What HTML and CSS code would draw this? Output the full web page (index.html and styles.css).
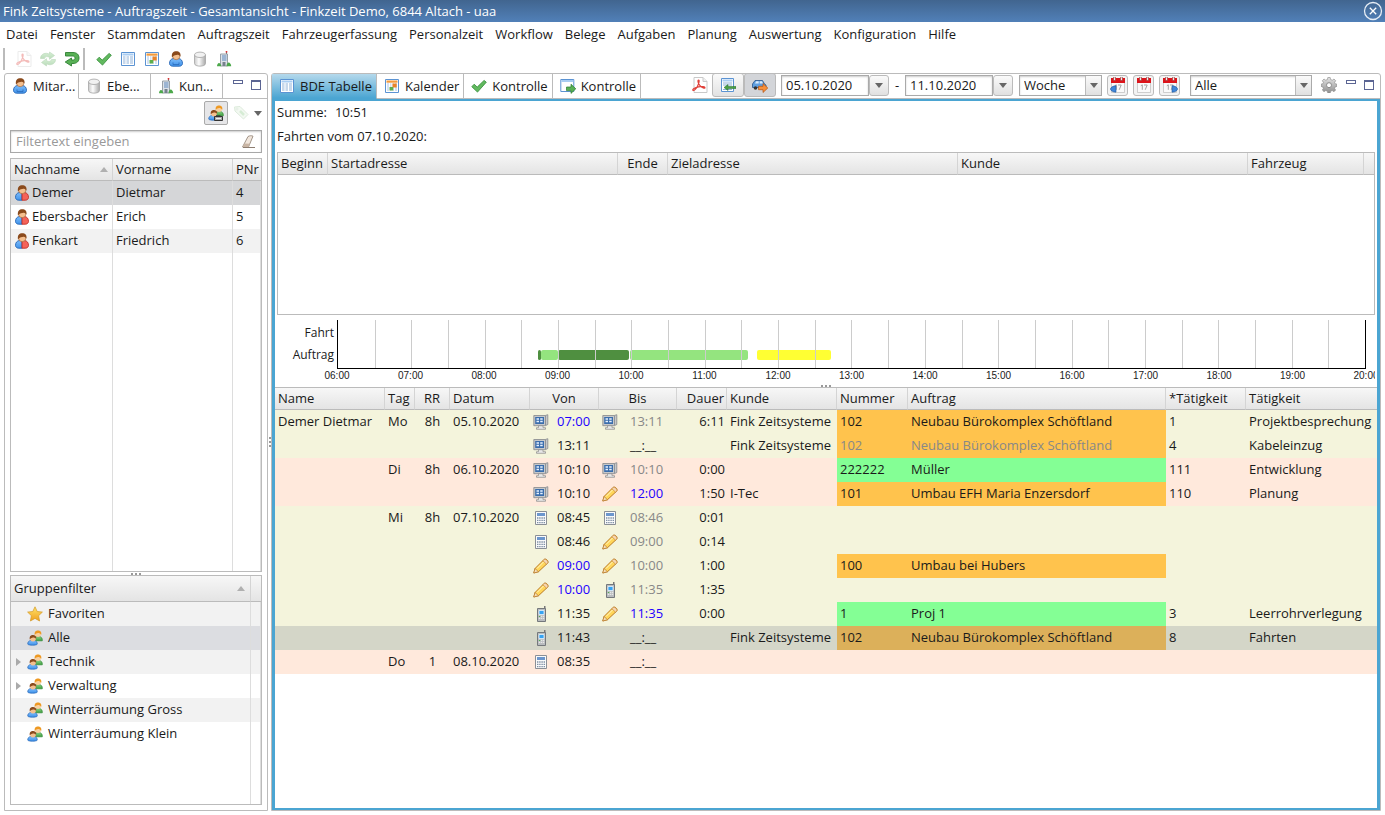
FILE: index.html
```html
<!DOCTYPE html>
<html lang="de">
<head>
<meta charset="utf-8">
<meta name="viewport" content="width=device-width, initial-scale=1">
<title>Fink Zeitsysteme - Auftragszeit</title>
<link rel="stylesheet" href="styles.css">
</head>
<body>
<svg class="defs" aria-hidden="true">
  <defs>
    <linearGradient id="g-blue" x1="0" y1="0" x2="0" y2="1"><stop offset="0" stop-color="#7dbcfa"/><stop offset="1" stop-color="#3f92ea"/></linearGradient>
    <linearGradient id="g-green" x1="0" y1="0" x2="0" y2="1"><stop offset="0" stop-color="#8fd48a"/><stop offset="1" stop-color="#3a9a3a"/></linearGradient>
    <linearGradient id="g-cyl" x1="0" y1="0" x2="1" y2="0"><stop offset="0" stop-color="#c9c9c9"/><stop offset=".4" stop-color="#fdfdfd"/><stop offset="1" stop-color="#a8a8a8"/></linearGradient>
    <linearGradient id="g-gold" x1="0" y1="0" x2="0" y2="1"><stop offset="0" stop-color="#ffe46a"/><stop offset="1" stop-color="#f0a020"/></linearGradient>
    <linearGradient id="g-grey" x1="0" y1="0" x2="0" y2="1"><stop offset="0" stop-color="#e4e4e4"/><stop offset="1" stop-color="#8f8f8f"/></linearGradient>
  </defs>
  <symbol id="i-pdf" viewBox="0 0 16 16"><path d="M2 .5h9l4 4v11H2z" fill="#fff" stroke="#c9c9c9"/><path d="M11 .5v4h4" fill="#eee" stroke="#c9c9c9"/><path d="M6.500 3c1.500 0 0 4-1 6.200S2 14.200 1 13.300s1.800-2.600 5.500-3.400 6.500-.3 6.500.8-3 .2-5-2S5.500 3 6.500 3z" fill="none" stroke="#e0403a" stroke-width="1.200"/></symbol>
  <symbol id="i-refresh" viewBox="0 0 16 16"><path d="M.5 7.500C.5 3 5.500 1 9.500 3.200V1l5 3.500-5 3.800V6.300C7 5 5 5.500 4.500 7.500z" fill="url(#g-green)" stroke="#3a8f3a" stroke-width=".6"/><path d="M15.500 8.500c0 4.500-5 6.500-9 4.300V15l-5-3.500 5-3.800v2c2.500 1.300 4.500.8 5-1.200z" fill="url(#g-green)" stroke="#3a8f3a" stroke-width=".6"/></symbol>
  <symbol id="i-return" viewBox="0 0 16 16"><path d="M1.500 1.500H9c4 0 6 2.300 6 5.500s-2 5.500-6 5.500H7.500V15L1.200 11 7.500 7v2H9c1.300 0 2-.8 2-1.800S10.300 5 9 5H1.500z" fill="#58b055" stroke="#2f7f33" stroke-width=".9"/></symbol>
  <symbol id="i-check" viewBox="0 0 16 16"><path d="M.8 8.700 3.200 6.200l3 2.900 6.900-6.700 2.200 1.800-8.800 9.900z" fill="#62b95f" stroke="#2f8a35" stroke-width=".8"/></symbol>
  <symbol id="i-table" viewBox="0 0 16 16"><path d="M1.500 1.500h13v13h-13z" fill="#fff" stroke="#5b93d3"/><path d="M2.500 2.500h11v2h-11z" fill="#a9cdf2"/><path d="M3 6h10M3 8h10M3 10h10M3 12h10" stroke="#8fb1d8"/><path d="M6 5v9M9.500 5v9" stroke="#fff"/></symbol>
  <symbol id="i-cal" viewBox="0 0 16 16"><path d="M1.500 1.500h13v13h-13z" fill="#fff" stroke="#5b93d3"/><path d="M2.500 2.500h11v2.200h-11z" fill="#f39a3c"/><path d="M3 6h10M3 8h10M3 10h10M3 12h10" stroke="#a9c3e2"/><path d="M5.500 5v9M8 5v9M10.500 5v9" stroke="#fff"/><path d="M8.500 5.500h4.200v4H8.500z" fill="#e98228"/><path d="M5.500 9h3.800v3.500H5.500z" fill="#5cae4b"/></symbol>
  <symbol id="i-person" viewBox="0 0 16 16"><path d="M1.500 12.500c0-3 1.500-4.700 4-5h5c2.500.3 4 2 4 5 0 1.500-1.500 2.700-3 2.700h-7c-1.500 0-3-1.200-3-2.700z" fill="url(#g-blue)" stroke="#2564b4" stroke-width=".9"/><path d="M5 11.500v2h6v-2" fill="none" stroke="#2564b4" stroke-width=".7"/><circle cx="8.200" cy="5" r="3.700" fill="#f4bf8e" stroke="#8a4a1c" stroke-width=".5"/><path d="M4 6.500C3.200 2.200 5.400.3 8.300.3s4.700 1.600 4.200 5.200C11.500 4.500 11 3.500 9.500 3.700S5.800 4 4 6.500z" fill="#8a4a1c"/></symbol>
  <symbol id="i-worker" viewBox="0 0 16 16"><path d="M1.500 12.500c0-3 1.500-4.700 4-5H8v7.700H4.500c-1.500 0-3-1.200-3-2.700z" fill="url(#g-blue)" stroke="#2564b4" stroke-width=".9"/><path d="M8 7.500h2.500c2.500.3 4 2 4 5 0 1.500-1.500 2.700-3 2.700H8z" fill="#f4635a" stroke="#c03028" stroke-width=".9"/><circle cx="8.200" cy="5" r="3.700" fill="#f4bf8e" stroke="#8a4a1c" stroke-width=".5"/><path d="M4 6.500C3.200 2.200 5.400.3 8.300.3s4.700 1.600 4.200 5.200C11.500 4.500 11 3.500 9.500 3.700S5.800 4 4 6.500z" fill="#8a4a1c"/></symbol>
  <symbol id="i-db" viewBox="0 0 16 16"><path d="M2.500 4v8.500c0 3.500 11 3.500 11 0V4z" fill="url(#g-cyl)" stroke="#a5a5a5" stroke-width=".8"/><ellipse cx="8" cy="3.800" rx="5.500" ry="2.700" fill="#f1f1f1" stroke="#a5a5a5" stroke-width=".8"/></symbol>
  <symbol id="i-building" viewBox="0 0 16 16"><path d="M10.500 1v3" stroke="#555" stroke-width=".8"/><path d="M9.700 0h1.600v1.600H9.700z" fill="#d33"/><path d="M4.500 3h7v12h-7z" fill="#dde2e8" stroke="#8e979f" stroke-width=".9"/><path d="M6 5h4.500M6 7h4.500M6 9h4.500" stroke="#5d88bd"/><path d="M6.500 11h3v4h-3z" fill="#76828d"/><path d="M1 15.300c0-1.800 1-3.300 2-3.300s2.200 1.500 2.200 3.300zM10.500 15.300c0-2 1-3.800 2.200-3.800s2.500 1.800 2.500 3.800z" fill="#4ba84a"/></symbol>
  <symbol id="i-users" viewBox="0 0 16 16"><path d="M7 10.800c-.3-2.500 1-4 2.500-4.200h3c2 .2 3 1.900 2.800 4.200z" fill="url(#g-green)" stroke="#2f8a35" stroke-width=".7"/><circle cx="11" cy="4" r="3" fill="#f9cf9d"/><path d="M7.700 5C7.200 1.500 9 .4 11 .4s3.900 1.200 3.300 4.400C13 3.500 12 2.800 11 3S8.800 3.500 7.700 5z" fill="#ee9922"/><path d="M.8 14.200c-.3-2 1-3.500 3-3.700h3.400c2 .2 3.300 1.700 3 3.700-.9 1.300-8.500 1.300-9.400 0z" fill="url(#g-blue)" stroke="#2564b4" stroke-width=".7"/><circle cx="6" cy="8.500" r="2.900" fill="#f4bf8e"/><path d="M2.800 9.400C2.200 6 4 5 6 5s3.700 1.200 3.200 3.800C8 7.800 7 7.200 6 7.500S3.900 7.800 2.800 9.400z" fill="#8a4a1c"/></symbol>
  <symbol id="i-key" viewBox="0 0 9 6"><path d="M.5 1.500h8v4h-8z" fill="#aaa" stroke="#333"/><path d="M2.500 1.500V.3h4" fill="none" stroke="#333" stroke-width=".8"/><path d="M2 3.500h5" stroke="#eee"/></symbol>
  <symbol id="i-tag" viewBox="0 0 16 16"><path d="M1.500 2 7 1.500l8 8L10.500 14l-8.500-8z" fill="#dff0dc" stroke="#9fc79c"/><circle cx="4" cy="4" r="1" fill="#fff" stroke="#8bb188" stroke-width=".6"/><path d="m7 6 4 4" stroke="#8cc98a" stroke-width="2.500"/></symbol>
  <symbol id="i-eraser" viewBox="0 0 16 16"><path d="M1.500 13 7 2.500c2-1 3.500-1 5-.3L7.500 13z" fill="#f1e6dc" stroke="#8d7d70" stroke-width=".8"/><path d="m3.500 9.500 5.500.2L7.500 13h-6z" fill="#c9b5a4"/><path d="M2 13.500h12" stroke="#8d7d70"/></symbol>
  <symbol id="i-star" viewBox="0 0 16 16"><path d="m8 .8 2.200 4.700 5.200.6-3.800 3.600 1 5.300L8 12.400 3.400 15l1-5.300L.6 6.100l5.200-.6z" fill="url(#g-gold)" stroke="#d39a26" stroke-width=".7"/></symbol>
  <symbol id="i-export" viewBox="0 0 16 16"><path d="M.8 1.500h13v12H.8z" fill="#fff" stroke="#5b93d3"/><path d="M1.300 2h12v2h-12z" fill="#a9cdf2"/><path d="M6.500 9H11V6.200l4.800 4.600L11 15.400v-2.800H6.500z" fill="#58b055" stroke="#2a7a30" stroke-width=".7"/></symbol>
  <symbol id="i-tablearrow" viewBox="0 0 16 16"><path d="M1.500 1.500h12v13h-12z" fill="#fff" stroke="#5b93d3"/><path d="M2.500 2.500h10v2h-10z" fill="#a9cdf2"/><path d="M3 6h9M3 8h9M3 12.500h9" stroke="#8fb1d8"/><path d="m4 10.500 4-3v2h8v2H8v2z" fill="#4aa048" stroke="#226a26" stroke-width=".5"/></symbol>
  <symbol id="i-car" viewBox="0 0 16 16"><path d="M.5 10.500V7L3 3.500h7.500l2 3.500 1.500 1v2.500z" fill="#5f9fe0" stroke="#28558c" stroke-width=".8"/><path d="M3 6.500 4.200 4.200h2.500v2.300zM7.700 4.200h2.300l1 2.300H7.700z" fill="#dcecfb"/><circle cx="3.500" cy="11" r="1.800" fill="#333"/><path d="M6.500 9.300H11V6.500l4.800 4.500L11 15.500v-2.800H6.500z" fill="#f7903a" stroke="#b5520f" stroke-width=".7"/></symbol>
  <symbol id="i-day" viewBox="0 0 16 16"><path d="M1.500 5h13v10.500h-13z" fill="#fafafa" stroke="#bbb" stroke-width=".7"/><path d="M1 1h14v5H1z" fill="#dc141b"/><path d="M3.500 0h2v3.500h-2zM10.500 0h2v3.500h-2z" fill="#eee" stroke="#8d2020" stroke-width=".5"/><path d="m4.800 8.800 1.500-1v5M8 8h3.200l-2 4.800" fill="none" stroke="#a5a5a5"/></symbol>
  <symbol id="i-left" viewBox="0 0 8 8"><path d="M6 .8v6.400C3 7.200.5 5.500.5 4S3 .8 6 .8z" fill="#3f86d8" stroke="#1d559c" stroke-width=".6"/></symbol>
  <symbol id="i-gear" viewBox="0 0 16 16"><path d="M6.800.5h2.400l.4 2 1.700.7L13 2l1.700 1.700-1.100 1.700.6 1.400 1.800.4v2.100l-1.800.6-.6 1.500 1 1.600-1.600 1.700-1.700-1.100-1.700.6-.4 1.800H6.800l-.4-1.800-1.700-.6L3 14.700 1.300 13l1.100-1.600-.7-1.500L0 9.300V7.200l1.700-.4.7-1.400-1.100-1.700L3 2l1.700 1.200 1.700-.7z" fill="url(#g-grey)" stroke="#868686" stroke-width=".6"/><circle cx="8" cy="8.200" r="2.500" fill="#fff" stroke="#8b8b8b"/></symbol>
  <symbol id="i-pc" viewBox="0 0 16 16"><path d="M.8 1.500h11.500L14.800.7v9.800l-2.500 1.200H.8z" fill="#c6c8ca" stroke="#85888c" stroke-width=".8"/><path d="M12.500 1.500v10" stroke="#909498"/><path d="M2.200 3h8.800v7H2.200z" fill="#3a6dac"/><path d="M3.500 5h2.500M7.200 5h2.500M3.500 7.500h2.500M7.200 7.500h2.500" stroke="#e8f2ff" stroke-width="1.400"/><path d="M5.500 11.700h4.500v2h2.500v1.600H3.500v-1.600h2z" fill="#e8e8e8" stroke="#8a8a8a" stroke-width=".7"/></symbol>
  <symbol id="i-pencil" viewBox="0 0 16 16"><path d="M.8 15 2 10.500 11 1.500c1.700-1.500 5 1.300 3.800 3.500L5.500 13.700z" fill="#ffd65a" stroke="#b3701c" stroke-width=".9"/><path d="M.8 15 2 10.500l3.500 3.200z" fill="#f5deb8" stroke="#b3701c" stroke-width=".6"/><path d="m9.800 2.700 3.800 3.500 1.200-1.300c.7-2.100-2.300-4.500-3.800-3.300z" fill="#f7d5b0" stroke="#b3701c" stroke-width=".5"/><path d="m4 10.500 6.500-6.500" stroke="#fff7c4"/></symbol>
  <symbol id="i-calc" viewBox="0 0 16 16"><path d="M2.500 1.500h11v13h-11z" fill="#fafafa" stroke="#8a8f96"/><path d="M4 3h8v3H4z" fill="#6c96cd"/><path d="M4 8h8M4 10.300h8M4 12.600h8" stroke="#7d8ea4" stroke-width="1.300" stroke-dasharray="1.400 .8"/></symbol>
  <symbol id="i-phone" viewBox="0 0 16 16"><path d="M11 0h1.500v4H11z" fill="#777"/><path d="M4.500 2.500h8v13h-8z" fill="#b9bcbf" stroke="#74787c"/><path d="M6 4.500h5v4H6z" fill="#36a3f2" stroke="#e4f3ff" stroke-width=".8"/><path d="M5.800 10.300h5.400M5.800 12.300h5.400" stroke="#f2f2f2" stroke-dasharray="1.400 .6"/><path d="M5.800 10h1.500v1H5.800z" fill="#5a5"/></symbol>
  <symbol id="i-close" viewBox="0 0 20 20"><circle cx="10" cy="10" r="8.500" fill="none" stroke="#e6edf5" stroke-width="1.300"/><path d="m6.800 6.800 6.400 6.400m0-6.400-6.400 6.400" stroke="#fff" stroke-width="1.300"/></symbol>
</svg>

<header class="titlebar">
  <h1>Fink Zeitsysteme - Auftragszeit - Gesamtansicht - Finkzeit Demo, 6844 Altach - uaa</h1>
  <button class="close" aria-label="Schließen"><svg><use href="#i-close"/></svg></button>
</header>

<nav class="menu">
  <button>Datei</button><button>Fenster</button><button>Stammdaten</button><button>Auftragszeit</button><button>Fahrzeugerfassung</button><button>Personalzeit</button><button>Workflow</button><button>Belege</button><button>Aufgaben</button><button>Planung</button><button>Auswertung</button><button>Konfiguration</button><button>Hilfe</button>
</nav>

<div class="toolbar">
  <span class="sep"></span>
  <div class="tools">
    <button disabled aria-label="PDF"><svg class="ic"><use href="#i-pdf"/></svg></button>
    <button disabled aria-label="Aktualisieren"><svg class="ic"><use href="#i-refresh"/></svg></button>
    <button aria-label="Zurück"><svg class="ic"><use href="#i-return"/></svg></button>
  </div>
  <span class="sep"></span>
  <div class="tools">
    <button aria-label="Kontrolle"><svg class="ic"><use href="#i-check"/></svg></button>
    <button aria-label="Tabelle"><svg class="ic"><use href="#i-table"/></svg></button>
    <button aria-label="Kalender"><svg class="ic"><use href="#i-cal"/></svg></button>
    <button aria-label="Mitarbeiter"><svg class="ic"><use href="#i-person"/></svg></button>
    <button aria-label="Ebenen"><svg class="ic"><use href="#i-db"/></svg></button>
    <button aria-label="Kunden"><svg class="ic"><use href="#i-building"/></svg></button>
  </div>
</div>

<main class="work">
  <aside class="folder side">
    <div class="tabbar">
      <button class="tab current"><svg class="ic"><use href="#i-person"/></svg>Mitar...</button>
      <button class="tab"><svg class="ic"><use href="#i-db"/></svg>Ebe...</button>
      <button class="tab"><svg class="ic"><use href="#i-building"/></svg>Kun...</button>
      <div class="winctl"><button class="min" aria-label="Minimieren"></button><button class="max" aria-label="Maximieren"></button></div>
    </div>
    <div class="side-body">
      <div class="side-tools">
        <button class="toggle" aria-label="Gruppen"><svg class="ic"><use href="#i-users"/><use href="#i-key" x="6" y="10" width="9" height="6"/></svg></button>
        <button class="plain" disabled aria-label="Markierung"><svg class="ic"><use href="#i-tag"/></svg></button>
        <button class="plain" aria-label="Menü"><span class="down"></span></button>
      </div>
      <div class="filter">
        <input type="text" placeholder="Filtertext eingeben" aria-label="Filtertext">
        <button aria-label="Leeren"><svg class="ic"><use href="#i-eraser"/></svg></button>
      </div>
      <div class="box staff">
        <table class="list">
          <colgroup><col class="c-last"><col><col class="c-pnr"></colgroup>
          <thead><tr><th>Nachname<span class="up"></span></th><th>Vorname</th><th>PNr</th></tr></thead>
          <tbody>
            <tr class="sel"><td><svg class="ic"><use href="#i-worker"/></svg>Demer</td><td>Dietmar</td><td>4</td></tr>
            <tr><td><svg class="ic"><use href="#i-worker"/></svg>Ebersbacher</td><td>Erich</td><td>5</td></tr>
            <tr class="odd"><td><svg class="ic"><use href="#i-worker"/></svg>Fenkart</td><td>Friedrich</td><td>6</td></tr>
            <tr class="fill"><td></td><td></td><td></td></tr>
          </tbody>
        </table>
      </div>
      <div class="sash"></div>
      <div class="box groups">
        <table class="list">
          <colgroup><col><col class="c-end"></colgroup>
          <thead><tr><th>Gruppenfilter<span class="up"></span></th><th></th></tr></thead>
          <tbody>
            <tr class="odd"><td><span class="twist"></span><svg class="ic"><use href="#i-star"/></svg>Favoriten</td><td></td></tr>
            <tr class="sel2"><td><span class="twist"></span><svg class="ic"><use href="#i-users"/></svg>Alle</td><td></td></tr>
            <tr class="odd"><td><span class="twist open"></span><svg class="ic"><use href="#i-users"/></svg>Technik</td><td></td></tr>
            <tr><td><span class="twist open"></span><svg class="ic"><use href="#i-users"/></svg>Verwaltung</td><td></td></tr>
            <tr class="odd"><td><span class="twist"></span><svg class="ic"><use href="#i-users"/></svg>Winterräumung Gross</td><td></td></tr>
            <tr><td><span class="twist"></span><svg class="ic"><use href="#i-users"/></svg>Winterräumung Klein</td><td></td></tr>
            <tr class="fill"><td></td><td></td></tr>
          </tbody>
        </table>
      </div>
    </div>
  </aside>

  <div class="vsash"></div>

  <section class="folder view">
    <div class="tabbar">
      <button class="tab active"><svg class="ic"><use href="#i-table"/></svg>BDE Tabelle</button>
      <button class="tab"><svg class="ic"><use href="#i-cal"/></svg>Kalender</button>
      <button class="tab"><svg class="ic"><use href="#i-check"/></svg>Kontrolle</button>
      <button class="tab"><svg class="ic"><use href="#i-export"/></svg>Kontrolle</button>
      <div class="view-tools">
        <button class="plain" aria-label="PDF"><svg class="ic"><use href="#i-pdf"/></svg></button>
        <div class="pair">
          <button class="wide" aria-label="Tabelle"><svg class="ic"><use href="#i-tablearrow"/></svg></button>
          <button class="wide pressed" aria-label="Fahrten"><svg class="ic"><use href="#i-car"/></svg></button>
        </div>
        <div class="date"><input type="text" value="05.10.2020" aria-label="Von"><button aria-label="Datum wählen"><span class="down"></span></button></div>
        <span class="dash">-</span>
        <div class="date"><input type="text" value="11.10.2020" aria-label="Bis"><button aria-label="Datum wählen"><span class="down"></span></button></div>
        <div class="combo span"><select aria-label="Zeitraum"><option>Woche</option></select><span class="arrow"><span class="down"></span></span></div>
        <div class="days">
          <button aria-label="Zurück"><svg class="ic"><use href="#i-day"/><use href="#i-left" x="0" y="8" width="8" height="8"/></svg></button>
          <button aria-label="Heute"><svg class="ic"><use href="#i-day"/></svg></button>
          <button aria-label="Weiter"><svg class="ic"><use href="#i-day"/><use href="#i-left" width="8" height="8" transform="translate(16 8) scale(-1 1)"/></svg></button>
        </div>
        <div class="combo all"><select aria-label="Auswahl"><option>Alle</option></select><span class="arrow"><span class="down"></span></span></div>
        <button class="plain" aria-label="Einstellungen"><svg class="ic"><use href="#i-gear"/></svg></button>
      </div>
      <div class="winctl"><button class="min" aria-label="Minimieren"></button><button class="max" aria-label="Maximieren"></button></div>
    </div>

    <div class="view-body">
      <div class="trips">
        <p>Summe:<span class="sum">10:51</span></p>
        <p>Fahrten vom 07.10.2020:</p>
        <div class="box trip-box">
          <table class="list">
            <colgroup><col class="t-50"><col class="t-290"><col class="t-50"><col class="t-290"><col class="t-290"><col><col class="c-end"></colgroup>
            <thead><tr><th>Beginn</th><th>Startadresse</th><th class="c">Ende</th><th>Zieladresse</th><th>Kunde</th><th>Fahrzeug</th><th></th></tr></thead>
          </table>
        </div>
      </div>

      <div class="timeline">
        <div class="names"><span>Fahrt</span><span>Auftrag</span></div>
        <div class="chart">
          <div class="plot">
            <span class="bar dark" style="left:19.500%;width:.25%"></span>
            <span class="bar light" style="left:19.750%;width:1.680%"></span>
            <span class="bar dark" style="left:21.430%;width:6.950%"></span>
            <span class="bar light" style="left:28.420%;width:11.460%"></span>
            <span class="bar yellow" style="left:40.830%;width:7.150%"></span>
            <div class="ticks"><i></i><i></i><i></i><i></i><i></i><i></i><i></i><i></i><i></i><i></i><i></i><i></i><i></i><i></i><i></i><i></i><i></i><i></i><i></i><i></i><i></i><i></i><i></i><i></i><i></i><i></i><i></i><i></i></div>
          </div>
          <div class="hours"><span>06:00</span><span>07:00</span><span>08:00</span><span>09:00</span><span>10:00</span><span>11:00</span><span>12:00</span><span>13:00</span><span>14:00</span><span>15:00</span><span>16:00</span><span>17:00</span><span>18:00</span><span>19:00</span><span>20:00</span></div>
        </div>
      </div>
      <div class="sash"></div>

      <table class="list bde">
        <colgroup><col class="b-name"><col class="b-tag"><col class="b-rr"><col class="b-date"><col class="b-von"><col class="b-bis"><col class="b-dauer"><col class="b-kunde"><col class="b-nr"><col><col class="b-tnr"><col class="b-tat"></colgroup>
        <thead><tr><th>Name</th><th>Tag</th><th class="c">RR</th><th>Datum</th><th class="c">Von</th><th class="c">Bis</th><th class="r">Dauer</th><th>Kunde</th><th>Nummer</th><th>Auftrag</th><th>*Tätigkeit</th><th>Tätigkeit</th></tr></thead>
        <tbody>
          <tr class="y"><td>Demer Dietmar</td><td>Mo</td><td class="c">8h</td><td>05.10.2020</td><td><svg class="ic"><use href="#i-pc"/></svg><b class="blue">07:00</b></td><td><svg class="ic"><use href="#i-pc"/></svg><b class="grey">13:11</b></td><td class="r">6:11</td><td>Fink Zeitsysteme</td><td class="o">102</td><td class="o">Neubau Bürokomplex Schöftland</td><td>1</td><td>Projektbesprechung</td></tr>
          <tr class="y"><td></td><td></td><td></td><td></td><td><svg class="ic"><use href="#i-pc"/></svg><b>13:11</b></td><td><svg class="ic"></svg><b>__:__</b></td><td></td><td>Fink Zeitsysteme</td><td class="o grey">102</td><td class="o grey">Neubau Bürokomplex Schöftland</td><td>4</td><td>Kabeleinzug</td></tr>
          <tr class="p"><td></td><td>Di</td><td class="c">8h</td><td>06.10.2020</td><td><svg class="ic"><use href="#i-pc"/></svg><b>10:10</b></td><td><svg class="ic"><use href="#i-pc"/></svg><b class="grey">10:10</b></td><td class="r">0:00</td><td></td><td class="g">222222</td><td class="g">Müller</td><td>111</td><td>Entwicklung</td></tr>
          <tr class="p"><td></td><td></td><td></td><td></td><td><svg class="ic"><use href="#i-pc"/></svg><b>10:10</b></td><td><svg class="ic"><use href="#i-pencil"/></svg><b class="blue">12:00</b></td><td class="r">1:50</td><td>I-Tec</td><td class="o">101</td><td class="o">Umbau EFH Maria Enzersdorf</td><td>110</td><td>Planung</td></tr>
          <tr class="y"><td></td><td>Mi</td><td class="c">8h</td><td>07.10.2020</td><td><svg class="ic"><use href="#i-calc"/></svg><b>08:45</b></td><td><svg class="ic"><use href="#i-calc"/></svg><b class="grey">08:46</b></td><td class="r">0:01</td><td></td><td></td><td></td><td></td><td></td></tr>
          <tr class="y"><td></td><td></td><td></td><td></td><td><svg class="ic"><use href="#i-calc"/></svg><b>08:46</b></td><td><svg class="ic"><use href="#i-pencil"/></svg><b class="grey">09:00</b></td><td class="r">0:14</td><td></td><td></td><td></td><td></td><td></td></tr>
          <tr class="y"><td></td><td></td><td></td><td></td><td><svg class="ic"><use href="#i-pencil"/></svg><b class="blue">09:00</b></td><td><svg class="ic"><use href="#i-pencil"/></svg><b class="grey">10:00</b></td><td class="r">1:00</td><td></td><td class="o">100</td><td class="o">Umbau bei Hubers</td><td></td><td></td></tr>
          <tr class="y"><td></td><td></td><td></td><td></td><td><svg class="ic"><use href="#i-pencil"/></svg><b class="blue">10:00</b></td><td><svg class="ic"><use href="#i-phone"/></svg><b class="grey">11:35</b></td><td class="r">1:35</td><td></td><td></td><td></td><td></td><td></td></tr>
          <tr class="y"><td></td><td></td><td></td><td></td><td><svg class="ic"><use href="#i-phone"/></svg><b>11:35</b></td><td><svg class="ic"><use href="#i-pencil"/></svg><b class="blue">11:35</b></td><td class="r">0:00</td><td></td><td class="g">1</td><td class="g">Proj 1</td><td>3</td><td>Leerrohrverlegung</td></tr>
          <tr class="s"><td></td><td></td><td></td><td></td><td><svg class="ic"><use href="#i-phone"/></svg><b>11:43</b></td><td><svg class="ic"></svg><b>__:__</b></td><td></td><td>Fink Zeitsysteme</td><td class="o">102</td><td class="o">Neubau Bürokomplex Schöftland</td><td>8</td><td>Fahrten</td></tr>
          <tr class="p"><td></td><td>Do</td><td class="c">1</td><td>08.10.2020</td><td><svg class="ic"><use href="#i-calc"/></svg><b>08:35</b></td><td><svg class="ic"></svg><b>__:__</b></td><td></td><td></td><td></td><td></td><td></td><td></td></tr>
        </tbody>
      </table>
    </div>
  </section>
</main>
</body>
</html>
```
FILE: styles.css
```css
* { box-sizing: border-box; }
html, body { height: 100%; }
body {
  margin: 0;
  display: flex;
  flex-direction: column;
  font: 13px/18px "Open Sans", "Noto Sans", sans-serif;
  color: #1a1a1a;
  background: #fff;
  overflow: hidden;
}
button, input, select { font: inherit; color: inherit; margin: 0; }
button { border: 0; padding: 0; background: none; display: flex; align-items: center; }
p { margin: 0; }
.defs { position: absolute; width: 0; height: 0; }
.ic { width: 16px; height: 16px; flex: none; display: block; }

.titlebar {
  height: 22px;
  flex: none;
  display: flex;
  align-items: center;
  justify-content: space-between;
  padding: 0 2px 0 3px;
  color: #fff;
  background: linear-gradient(#41658f, #5180b8);
}
.titlebar h1 { margin: 0; font-size: 13px; font-weight: 400; }
.close svg { width: 20px; height: 20px; }

.menu { flex: none; height: 26px; display: flex; align-items: center; gap: 12px; padding: 0 0 2px 6px; }

.toolbar { flex: none; height: 25px; display: flex; align-items: center; padding: 0 0 3px 3px; }
.sep { width: 2px; height: 22px; background: #bbb; }
.tools { display: flex; gap: 8px; padding: 0 3px 0 11px; }
button:disabled .ic { opacity: .35; }

.work { flex: 1; min-height: 0; display: flex; padding: 0 4px 4px; }
.folder { display: flex; flex-direction: column; border: 1px solid #bbb; border-radius: 3px 3px 0 0; }
.side { width: 264px; flex: none; }
.view { flex: 1; min-width: 0; }
.vsash { width: 3px; flex: none; display: flex; }
.vsash::after { content: ""; margin: auto; width: 2px; height: 10px; background: repeating-linear-gradient(#999 0 2px, transparent 2px 4px); }

.tabbar { flex: none; height: 25px; display: flex; }
.tab { height: 25px; gap: 5px; padding: 0 4px 0 7px; border-right: 1px solid #bbb; border-bottom: 1px solid #bbb; white-space: nowrap; }
.side .tab { width: 74px; padding: 0 0 0 7px; }
.side .tab + .tab { width: 72px; }
.side .tab.current { border-bottom-color: transparent; }
.tab.active { background: linear-gradient(#b5d9ec, #4ba5d2); border-bottom-color: #4ba5d2; }
.winctl { flex: 1; display: flex; justify-content: flex-end; gap: 8px; padding: 6px 6px 0 0; border-bottom: 1px solid #bbb; }
.view .winctl { flex: none; padding-left: 9px; }
.min { width: 10px; height: 4px; border: 1px solid #5b6593; }
.max { width: 10px; height: 10px; border: 1px solid #5b6593; border-top-width: 2px; }

.side-body { flex: 1; min-height: 0; display: flex; flex-direction: column; padding: 2px 5px 5px; }
.side-tools { display: flex; justify-content: flex-end; gap: 5px; height: 24px; flex: none; }
.toggle { width: 24px; height: 24px; justify-content: center; border: 1px solid #aaa; border-radius: 2px; background: #e6e6e8; }
.down { border: 4px solid transparent; border-top: 5px solid #666; border-bottom: 0; }
.filter { flex: none; display: flex; align-items: center; height: 23px; margin: 5px 0; padding-right: 4px; border: 1px solid #a8a8a8; box-shadow: inset 0 1px 2px #ccc; }
.filter input { flex: 1; min-width: 0; border: 0; padding: 0 5px 2px; background: none; }
.filter input::placeholder { color: #999; opacity: 1; }
.box { border: 1px solid #bbb; background: #fff; overflow: hidden; }
.staff { flex: 1; min-height: 0; }
.groups { flex: none; height: 230px; }
.sash { flex: none; height: 3px; display: flex; align-items: center; justify-content: center; }
.sash::after { content: ""; width: 10px; height: 2px; background: repeating-linear-gradient(90deg, #999 0 2px, transparent 2px 4px); }

.list { width: 100%; height: 100%; table-layout: fixed; border-collapse: separate; border-spacing: 0; }
.list th {
  height: 22px;
  padding: 0 3px 2px;
  font-weight: 400;
  text-align: left;
  white-space: nowrap;
  border-right: 1px solid #d4d4d4;
  border-bottom: 1px solid #bbb;
  background: linear-gradient(#f7f7f7, #e4e4e4);
}
.list td { height: 24px; padding: 0 3px 2px; white-space: nowrap; overflow: hidden; }
.list th:last-child, .list td:last-child { border-right: 0; }
.list td .ic { display: inline-block; vertical-align: -4px; }
.side .list td { border-right: 1px solid #ddd; }
.side .list td .ic { margin-right: 2px; }
.list .fill td { height: auto; }
.list .c { text-align: center; }
.list .r { text-align: right; padding-right: 2px; }
.up { float: right; margin: 7px 1px 0 0; border: 4px solid transparent; border-bottom: 5px solid #b0b0b0; border-top: 0; }
.c-last { width: 102px; }
.c-pnr { width: 28px; }
.c-end { width: 10px; }
.sel { background: #d5d6d8; }
.sel2 { background: #dcdde1; }
.odd { background: #f2f2f2; }
.side .groups th { height: 26px; }
.groups .list td { padding-left: 5px; }
.groups .list td .ic { margin-right: 5px; }
.groups .up { margin-right: 2px; }
.twist { display: inline-block; width: 11px; height: 8px; vertical-align: 0; }
.twist.open::before { content: ""; display: block; width: 0; border: 4px solid transparent; border-left: 5px solid #aaa; border-right: 0; }

.view-tools { flex: 1; min-width: 0; display: flex; align-items: center; justify-content: flex-end; padding-bottom: 2px; border-bottom: 1px solid #bbb; }
.pair { display: flex; margin: 0 5px 0 4px; }
.wide { width: 32px; height: 24px; justify-content: center; border: 1px solid #bbb; border-radius: 3px; background: linear-gradient(#fafafa, #e2e2e2); }
.wide.pressed { background: #d3d5d9; }
.date { display: flex; }
.date input { width: 88px; height: 21px; padding: 0 4px 1px; border: 1px solid #aaa; box-shadow: inset 0 1px 2px #ccc; }
.date button { width: 20px; height: 21px; justify-content: center; border: 1px solid #bbb; border-radius: 3px; background: linear-gradient(#fafafa, #e0e0e0); }
.dash { width: 16px; text-align: center; }
.combo { position: relative; height: 21px; margin-left: 6px; border: 1px solid #aaa; box-shadow: inset 0 1px 2px #ccc; }
.combo select { display: block; appearance: none; width: 100%; height: 19px; padding: 0 4px 1px; border: 0; background: none; }
.arrow { position: absolute; top: 0; right: 0; bottom: 0; width: 16px; display: flex; align-items: center; justify-content: center; border-left: 1px solid #bbb; background: linear-gradient(#fafafa, #e0e0e0); pointer-events: none; }
.span { width: 83px; }
.all { width: 122px; margin: 0 9px 0 10px; }
.days { display: flex; gap: 5px; margin-left: 5px; }
.days button { width: 21px; height: 21px; justify-content: center; border: 1px solid #bbb; border-radius: 3px; background: #f3f3f3; }

.view-body { flex: 1; min-height: 0; display: flex; flex-direction: column; border: 3px solid #4ba5d2; border-width: 2px 3px; }
.trips { flex: none; padding: 1px 2px 0; }
.trips p { height: 24px; padding: 1px 0; }
.sum { margin-left: 8px; }
.trip-box { height: 163px; margin-top: 2px; }
.trip-box .list { height: auto; }
.t-50 { width: 50px; }
.t-290 { width: 290px; }

.timeline { flex: none; display: flex; height: 69px; margin-right: 2px; padding-top: 5px; overflow: hidden; }
.names { width: 62px; flex: none; padding-right: 3px; text-align: right; font-size: 12px; line-height: 22px; padding-top: 2px; }
.names span { display: block; }
.chart { flex: 1; min-width: 0; padding-right: 9px; }
.plot { position: relative; height: 49px; border: solid #000; border-width: 0 1px 1px; }
.ticks { position: relative; height: 48px; display: grid; grid-template-columns: repeat(28, 1fr); }
.ticks i { border-left: 1px solid #ccc; }
.ticks i:first-child { border-left: 0; }
.bar { position: absolute; top: 30px; height: 10px; border-radius: 2px; }
.dark { background: #4f8f40; }
.light { background: #94e47f; }
.yellow { background: #ffff33; }
.hours { display: flex; justify-content: space-between; font: 10px/14px "Liberation Sans", Arial, sans-serif; }
.hours span { width: 0; display: flex; justify-content: center; }

.bde { height: auto; flex: none; border-top: 1px solid #bbb; }
.bde td b { font-weight: 400; margin-left: 8px; }
.bde td:nth-child(6) b { margin-left: 12px; }
.b-name { width: 110px; }
.b-tag { width: 30px; }
.b-rr { width: 35px; }
.b-date { width: 80px; }
.b-von { width: 69px; }
.b-bis { width: 78px; }
.b-dauer { width: 50px; }
.b-kunde { width: 110px; }
.b-nr { width: 71px; }
.b-tnr { width: 80px; }
.b-tat { width: 131px; }
.bde .blue { color: #20f; }
.bde .grey { color: #888; }
.y { background: #f4f4dc; }
.p { background: #ffe9dc; }
.s { background: #d4d6c8; }
.o { background: #ffc34d; }
.g { background: #84ff95; }
.s .o { background: #dcb05a; }
```
